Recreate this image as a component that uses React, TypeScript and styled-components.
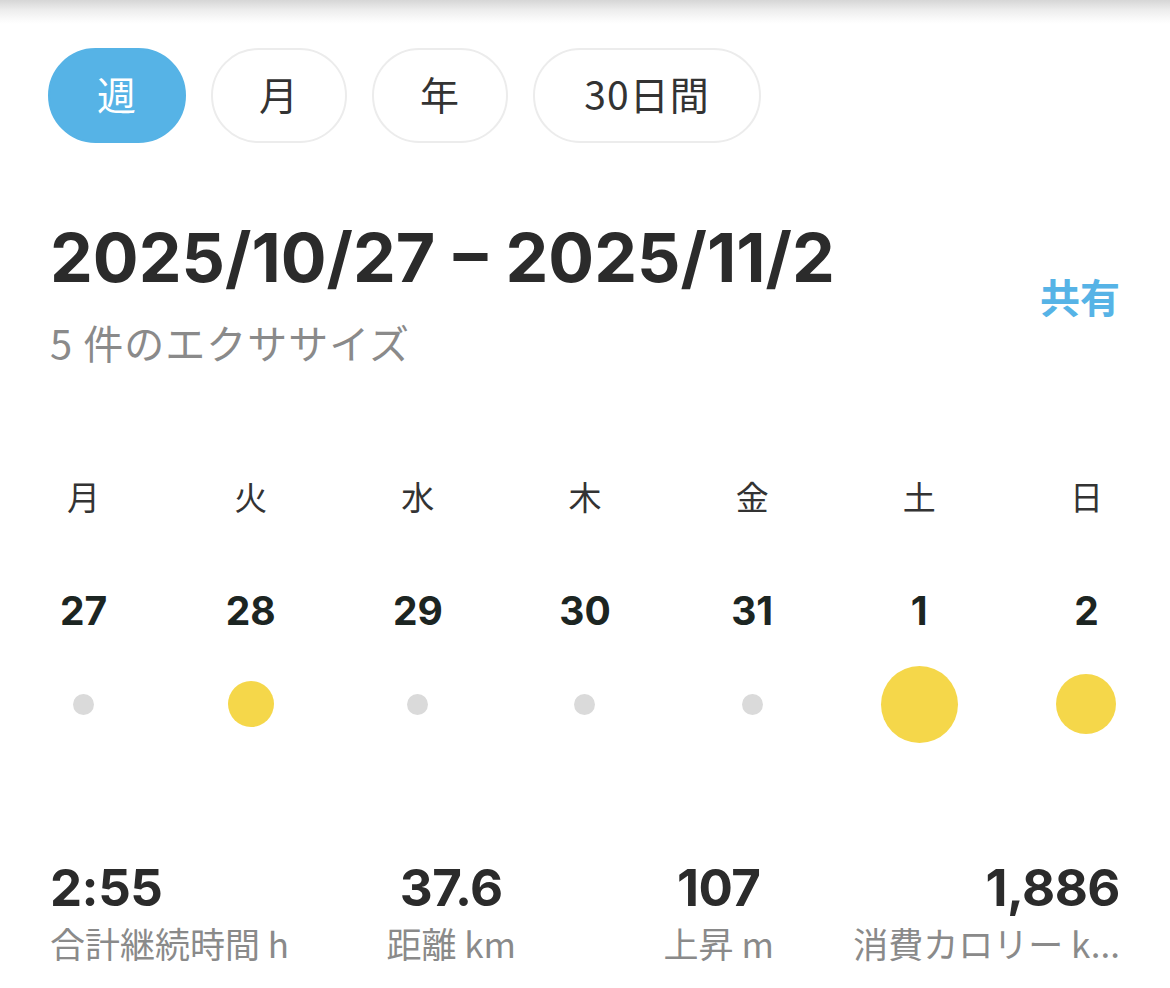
import React from "react";
import styled, { createGlobalStyle } from "styled-components";

const Global = createGlobalStyle`
  html, body { margin: 0; padding: 0; background: #fff; }
  body { font-family: "Noto Sans CJK JP", "Noto Sans", sans-serif; color: #333; }
`;

const Page = styled.div`
  width: 1170px;
  height: 988px;
  position: relative;
  overflow: hidden;
  background: #fff;
`;

const TopShade = styled.div`
  height: 24px;
  background: linear-gradient(#d6d6d6 0%, #ececec 40%, #fafafa 80%, #ffffff 100%);
`;

const Tabs = styled.div`
  display: flex;
  gap: 25px;
  padding: 24px 48px 0;
`;

const Tab = styled.div<{ $active?: boolean; $w: number }>`
  width: ${(p) => p.$w}px;
  height: 95px;
  box-sizing: border-box;
  border-radius: 48px;
  display: flex;
  align-items: center;
  justify-content: center;
  padding-bottom: 6px;
  font-size: 39px;
  letter-spacing: 1px;
  background: ${(p) => (p.$active ? "#56b3e6" : "#fff")};
  color: ${(p) => (p.$active ? "#fff" : "#333")};
  border: 2px solid ${(p) => (p.$active ? "#56b3e6" : "#ececec")};
`;

const Header = styled.div`
  display: flex;
  justify-content: space-between;
  align-items: center;
  padding: 74px 50px 0;
`;

const Title = styled.div`
  font-family: Inter, "Noto Sans", sans-serif;
  font-weight: 700;
  font-size: 68px;
  line-height: 80px;
  color: #2b2b2b;
  letter-spacing: 0;
  word-spacing: 2px;
`;

const Sub = styled.div`
  font-size: 40px;
  line-height: 50px;
  color: #8a8a8a;
  margin-top: 20px;
  letter-spacing: 1px;
`;

const Share = styled.div`
  font-size: 40px;
  font-weight: 700;
  color: #56b3e6;
  margin-top: 8px;
`;

const Week = styled.div`
  display: grid;
  grid-template-columns: repeat(7, 1fr);
  margin-top: 106px;
`;

const DayCol = styled.div`
  display: flex;
  flex-direction: column;
  align-items: center;
`;

const DayName = styled.div`
  font-size: 33px;
  line-height: 46px;
  color: #333;
`;

const DayNum = styled.div`
  font-family: Inter, "Noto Sans", sans-serif;
  font-weight: 700;
  font-size: 39px;
  line-height: 46px;
  color: #1c2522;
  margin-top: 69px;
`;

const DotBox = styled.div`
  height: 80px;
  margin-top: 30px;
  display: flex;
  align-items: center;
  justify-content: center;
`;

const Dot = styled.div<{ $size: number; $on?: boolean }>`
  width: ${(p) => p.$size}px;
  height: ${(p) => p.$size}px;
  border-radius: 50%;
  background: ${(p) => (p.$on ? "#f5d74a" : "#dadada")};
`;

const Stats = styled.div`
  display: grid;
  grid-template-columns: repeat(4, 1fr);
  padding: 0 50px;
  margin-top: 115px;
`;

const Stat = styled.div<{ $align: "left" | "center" | "right" }>`
  text-align: ${(p) => p.$align};
  min-width: 0;
`;

const Value = styled.div`
  font-family: Inter, "Noto Sans", sans-serif;
  font-weight: 700;
  font-size: 51px;
  line-height: 58px;
  color: #2b2b2b;
  letter-spacing: -0.5px;
`;

const Label = styled.div`
  font-size: 35px;
  line-height: 52px;
  color: #8a8a8a;
  white-space: nowrap;
`;

const tabs = [
  { t: "週", w: 138, a: true },
  { t: "月", w: 136 },
  { t: "年", w: 136 },
  { t: "30日間", w: 228 },
];

const days = [
  { n: "月", d: "27", s: 21, on: false },
  { n: "火", d: "28", s: 46, on: true },
  { n: "水", d: "29", s: 21, on: false },
  { n: "木", d: "30", s: 21, on: false },
  { n: "金", d: "31", s: 21, on: false },
  { n: "土", d: "1", s: 77, on: true },
  { n: "日", d: "2", s: 60, on: true },
];

const stats: { v: string; l: string; a: "left" | "center" | "right" }[] = [
  { v: "2:55", l: "合計継続時間 h", a: "left" },
  { v: "37.6", l: "距離 km", a: "center" },
  { v: "107", l: "上昇 m", a: "center" },
  { v: "1,886", l: "消費カロリー k...", a: "right" },
];

export default function App() {
  return (
    <Page>
      <Global />
      <TopShade />
      <Tabs>
        {tabs.map((t) => (
          <Tab key={t.t} $w={t.w} $active={t.a}>
            {t.t}
          </Tab>
        ))}
      </Tabs>
      <Header>
        <div>
          <Title>2025/10/27 – 2025/11/2</Title>
          <Sub>5 件のエクササイズ</Sub>
        </div>
        <Share>共有</Share>
      </Header>
      <Week>
        {days.map((d) => (
          <DayCol key={d.d}>
            <DayName>{d.n}</DayName>
            <DayNum>{d.d}</DayNum>
            <DotBox>
              <Dot $size={d.s} $on={d.on} />
            </DotBox>
          </DayCol>
        ))}
      </Week>
      <Stats>
        {stats.map((s) => (
          <Stat key={s.v} $align={s.a}>
            <Value>{s.v}</Value>
            <Label>{s.l}</Label>
          </Stat>
        ))}
      </Stats>
    </Page>
  );
}
